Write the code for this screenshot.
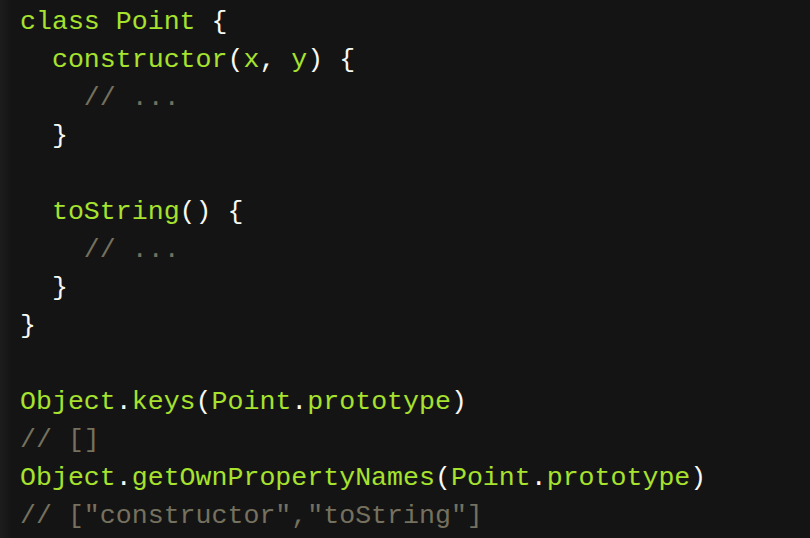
const G = 'text-[#a6e22e]';
const W = 'text-[#f8f8f2]';
const C = 'text-[#75715e]';

type Tok = [string, string];

const lines: Tok[][] = [
  [[G, 'class Point'], [W, ' {']],
  [[W, '  '], [G, 'constructor'], [W, '('], [G, 'x'], [W, ', '], [G, 'y'], [W, ') {']],
  [[C, '    // ...']],
  [[W, '  }']],
  [],
  [[W, '  '], [G, 'toString'], [W, '() {']],
  [[C, '    // ...']],
  [[W, '  }']],
  [[W, '}']],
  [],
  [[G, 'Object'], [W, '.'], [G, 'keys'], [W, '('], [G, 'Point'], [W, '.'], [G, 'prototype'], [W, ')']],
  [[C, '// []']],
  [
    [G, 'Object'],
    [W, '.'],
    [G, 'getOwnPropertyNames'],
    [W, '('],
    [G, 'Point'],
    [W, '.'],
    [G, 'prototype'],
    [W, ')'],
  ],
  [[C, '// ["constructor","toString"]']],
];

export default function App() {
  return (
    <div className="h-[538px] w-[810px] overflow-hidden bg-[#141414] bg-[linear-gradient(to_right,#1d1d1d_0px,#141414_12px)]">
      <pre className="pl-[20px] pt-[3px] font-['Courier_New','Nimbus_Mono_PS','FreeMono','Liberation_Mono',monospace] text-[26.6px] leading-[38px]">
        {lines.map((line, i) => (
          <div key={i} className="h-[38px] whitespace-pre">
            {line.map(([cls, text], j) => (
              <span key={j} className={cls}>
                {text}
              </span>
            ))}
          </div>
        ))}
      </pre>
    </div>
  );
}
